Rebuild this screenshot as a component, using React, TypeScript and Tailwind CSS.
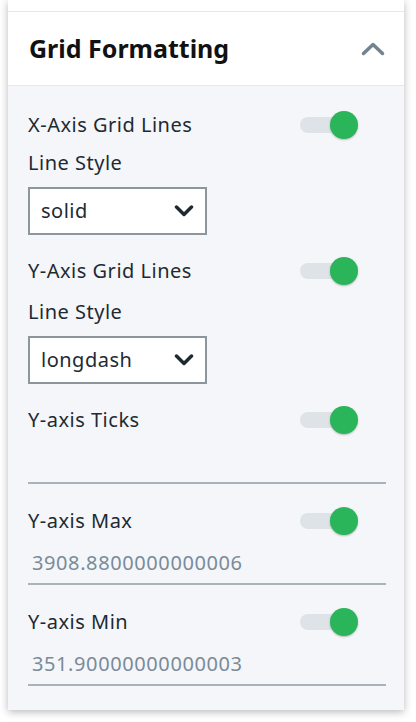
import React from 'react';

const font = { fontFamily: '"Noto Sans", Lato, sans-serif' };

function Toggle() {
  return (
    <div className="relative w-[58px] h-[28px] shrink-0">
      <div className="absolute left-0 top-[6px] w-[50px] h-[16px] rounded-full bg-[#dde3e7]" />
      <div className="absolute right-0 top-0 w-[28px] h-[28px] rounded-full bg-[#2bb55a] shadow-[0_1px_2px_rgba(0,0,0,0.25)]" />
    </div>
  );
}

function ToggleRow({ label, className = '' }: { label: string; className?: string }) {
  return (
    <div className={`flex items-center justify-between h-[28px] pr-[28px] ${className}`}>
      <span className="text-[20px] text-[#1e2a32] leading-none tracking-[0.5px]">{label}</span>
      <Toggle />
    </div>
  );
}

function Select({ value, className = '' }: { value: string; className?: string }) {
  return (
    <div className={`w-[179px] h-[48px] border-2 border-[#8c969c] bg-white flex items-center justify-between pl-[11px] pr-[11px] ${className}`}>
      <span className="text-[20px] text-[#1e2a32] leading-none tracking-[0.5px]">{value}</span>
      <svg width="20" height="12" viewBox="0 0 20 12" fill="none">
        <polyline points="2.5,2 10,9.5 17.5,2" stroke="#1e2a32" strokeWidth="3.5" strokeLinecap="round" strokeLinejoin="round" />
      </svg>
    </div>
  );
}

function ValueInput({ value, className = '' }: { value: string; className?: string }) {
  return (
    <div className={`h-[42px] border-b-2 border-[#a9b3ba] flex items-center pl-[4px] ${className}`}>
      <span className="text-[20px] text-[#7a8b98] leading-none tracking-[0.6px]">{value}</span>
    </div>
  );
}

export default function App() {
  return (
    <div className="bg-white min-h-screen" style={font}>
      <div className="ml-[8px] w-[396px] bg-white shadow-[0_2px_8px_rgba(0,0,0,0.28)]">
        <div className="h-[12px] bg-white border-b border-[#e4e8ec]" />
        <div className="h-[74px] flex items-center justify-between pl-[21px] pr-[19px] border-b border-[#e4e8ec]">
          <h2 className="text-[25px] font-bold text-[#111111] leading-none">Grid Formatting</h2>
          <svg width="24" height="14" viewBox="0 0 24 14" fill="none">
            <polyline points="2.5,11.5 12,2.5 21.5,11.5" stroke="#72848f" strokeWidth="3.5" strokeLinecap="round" strokeLinejoin="round" />
          </svg>
        </div>
        <div className="bg-[#f4f6fa] pl-[20px] pr-[18px] pt-[25px] pb-[24px]">
          <ToggleRow label="X-Axis Grid Lines" />
          <div className="mt-[12px] h-[24px] flex items-center text-[20px] text-[#1e2a32] tracking-[0.5px]">Line Style</div>
          <Select value="solid" className="mt-[12px]" />
          <ToggleRow label="Y-Axis Grid Lines" className="mt-[22px]" />
          <div className="mt-[15px] h-[24px] flex items-center text-[20px] text-[#1e2a32] tracking-[0.5px]">Line Style</div>
          <Select value="longdash" className="mt-[12px]" />
          <ToggleRow label="Y-axis Ticks" className="mt-[22px]" />
          <div className="mt-[48px] h-[2px] bg-[#a9b3ba]" />
          <ToggleRow label="Y-axis Max" className="mt-[23px]" />
          <ValueInput value="3908.8800000000006" className="mt-[8px]" />
          <ToggleRow label="Y-axis Min" className="mt-[23px]" />
          <ValueInput value="351.90000000000003" className="mt-[8px]" />
        </div>
      </div>
    </div>
  );
}
